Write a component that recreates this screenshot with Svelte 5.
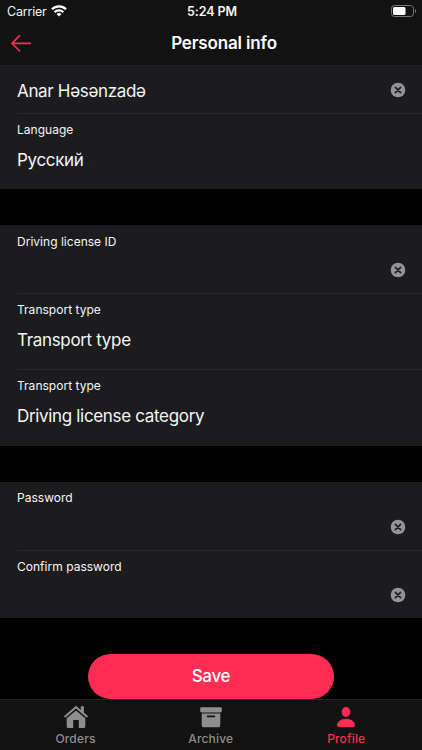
<script lang="ts">
    interface Field {
        label?: string;
        value?: string;
        clearable?: boolean;
    }

    let groups: Field[][] = $state([
        [
            { value: 'Anar Həsənzadə', clearable: true },
            { label: 'Language', value: 'Русский' }
        ],
        [
            { label: 'Driving license ID', value: '', clearable: true },
            { label: 'Transport type', value: 'Transport type' },
            { label: 'Transport type', value: 'Driving license category' }
        ],
        [
            { label: 'Password', value: '', clearable: true },
            { label: 'Confirm password', value: '', clearable: true }
        ]
    ]);

    const tabs = ['Orders', 'Archive', 'Profile'];
    let activeTab = $state('Profile');
</script>

<div class="screen">
    <header>
        <div class="status-bar">
            <div class="carrier">
                <span>Carrier</span>
                <svg width="16" height="12" viewBox="0 0 16 12" fill="none" stroke="#fff" stroke-width="2.3">
                    <path d="M1 4.3a10 10 0 0 1 14 0" />
                    <path d="M3.6 7.2a6.3 6.3 0 0 1 8.8 0" />
                    <path d="M8 11.6 5.5 9.1a3.6 3.6 0 0 1 5 0z" fill="#fff" stroke="none" />
                </svg>
            </div>
            <span class="time">5:24 PM</span>
            <svg class="battery" width="26" height="12" viewBox="0 0 26 12">
                <rect x="0.5" y="0.5" width="22" height="11" rx="3" fill="none" stroke="#77777a" />
                <rect x="2" y="2" width="12.5" height="8" rx="1.5" fill="#fff" />
                <path d="M24 4v4c1.6-.6 1.6-3.4 0-4z" fill="#77777a" />
            </svg>
        </div>
        <div class="nav-bar">
            <button class="back" aria-label="Back">
                <svg width="22" height="18" viewBox="0 0 22 18" fill="none" stroke="#f02e56" stroke-width="1.7" stroke-linecap="round" stroke-linejoin="round">
                    <path d="M20.4 9.300H2M9.600 1.600 2 9.300l7.600 7.700" />
                </svg>
            </button>
            <h1>Personal info</h1>
        </div>
    </header>

    <main>
        {#each groups as group}
            <section>
                {#each group as field}
                    <div class="field" class:compact={!field.label} class:text={field.label && !field.clearable}>
                        {#if field.label}
                            <span class="label">{field.label}</span>
                        {/if}
                        <div class="value-row">
                            <span class="value">{field.value}</span>
                            {#if field.clearable}
                                <button class="clear" aria-label="Clear" onclick={() => (field.value = '')}>
                                    <svg width="16" height="16" viewBox="0 0 16 16">
                                        <circle cx="8" cy="8" r="7.3" fill="#949496" />
                                        <path d="m5.4 5.4 5.2 5.2m0-5.2-5.2 5.2" stroke="#1c1c1e" stroke-width="1.7" stroke-linecap="round" />
                                    </svg>
                                </button>
                            {/if}
                        </div>
                    </div>
                {/each}
            </section>
        {/each}
        <button class="save">Save</button>
    </main>

    <nav class="tab-bar">
        {#each tabs as tab}
            <button class="tab" class:active={tab === activeTab} onclick={() => (activeTab = tab)}>
                {#if tab === 'Orders'}
                    <svg width="26" height="24" viewBox="0 0 26 24" fill="currentColor">
                        <path d="M13 .8.9 11.2l1.4 1.5L13 3.6l10.7 9.1 1.4-1.5-4.2-3.6V1.2h-3.1v3.7z" />
                        <path d="M13 5.4 3.7 13.3v8.5c0 .7.5 1.2 1.2 1.2h5.3v-8h5.6v8h5.3c.7 0 1.2-.5 1.2-1.2v-8.5z" />
                    </svg>
                {:else if tab === 'Archive'}
                    <svg width="26" height="24" viewBox="0 0 26 24" fill="currentColor">
                        <rect x="2.2" y="2.2" width="21.6" height="5.2" rx="1.3" />
                        <path fill-rule="evenodd" d="M3.7 8.5h18.6v11.2a2.6 2.6 0 0 1-2.6 2.6H6.3a2.6 2.6 0 0 1-2.6-2.6zM9.7 10.5a.9.9 0 0 0 0 1.8h6.6a.9.9 0 0 0 0-1.8z" />
                    </svg>
                {:else}
                    <svg width="26" height="24" viewBox="0 0 26 24" fill="currentColor">
                        <ellipse cx="13" cy="7" rx="4.3" ry="4.9" />
                        <path d="M4 20.3c0-3.7 4-6.6 9-6.6s9 2.9 9 6.6c0 1.2-.7 1.7-2 1.7H6c-1.300 0-2-.5-2-1.7z" />
                    </svg>
                {/if}
                <span>{tab}</span>
            </button>
        {/each}
    </nav>
</div>

<style>
    :global(body) {
        margin: 0;
        background: #000;
    }

    .screen {
        display: flex;
        flex-direction: column;
        width: 422px;
        height: 750px;
        overflow: hidden;
        background: #000;
        color: #f5f5f5;
        font-family: Inter, "Noto Sans", sans-serif;
    }

    button {
        padding: 0;
        border: none;
        background: none;
        color: inherit;
        font-family: inherit;
        cursor: pointer;
    }

    svg {
        display: block;
    }

    header {
        box-sizing: border-box;
        height: 65.8px;
        flex-shrink: 0;
        background: #121212;
        border-bottom: 1px solid #232325;
    }

    .status-bar {
        display: grid;
        grid-template-columns: 1fr auto 1fr;
        align-items: center;
        height: 22px;
        padding: 0 5px 0 7px;
        font-size: 12.5px;
    }

    .carrier {
        display: flex;
        align-items: center;
        gap: 4px;
        letter-spacing: -0.2px;
    }

    .time {
        font-weight: 600;
        letter-spacing: -0.1px;
    }

    .battery {
        justify-self: end;
    }

    .nav-bar {
        display: flex;
        align-items: center;
        height: 42px;
        padding: 0 6px 0 10px;
    }

    /* centred in the space right of the back button */
    h1 {
        flex: 1;
        margin: 0;
        font-size: 17px;
        font-weight: 600;
        letter-spacing: -0.15px;
        text-align: center;
        color: #fff;
    }

    main {
        display: flex;
        flex-direction: column;
        flex: 1;
        gap: 36px;
    }

    section {
        background: #1c1c1e;
    }

    .field {
        display: flex;
        flex-direction: column;
        box-sizing: border-box;
        height: 68.1px;
        margin-left: 17px;
        padding-top: 8.6px;
    }

    .field + .field {
        padding-top: 7.8px;
        border-top: 1px solid #29292b;
    }

    .field.text {
        height: 76.2px;
    }

    .field.compact {
        height: 47.2px;
        padding-top: 3.3px;
    }

    .label {
        font-size: 12px;
        line-height: 16px;
        letter-spacing: 0.02px;
    }

    .value-row {
        display: flex;
        align-items: center;
        justify-content: space-between;
        height: 44px;
        padding-right: 16px;
        flex-shrink: 0;
    }

    .value {
        font-size: 17px;
        letter-spacing: -0.33px;
    }

    .clear {
        margin-bottom: 3px;
    }

    .save {
        align-self: center;
        width: 246px;
        height: 44.8px;
        border-radius: 23px;
        background: #ff2d55;
        color: #fff;
        font-size: 17px;
        font-weight: 500;
        letter-spacing: -0.3px;
    }

    .tab-bar {
        display: grid;
        grid-template-columns: 143px 1fr 143.5px;
        box-sizing: border-box;
        height: 51.5px;
        flex-shrink: 0;
        padding: 0 4px;
        background: #121212;
        border-top: 1px solid #242426;
    }

    .tab {
        display: flex;
        flex-direction: column;
        align-items: center;
        padding-top: 5px;
        gap: 3px;
        color: #8e8e90;
        font-size: 12px;
        line-height: 14px;
        font-weight: 500;
        letter-spacing: 0.15px;
    }

    .tab.active {
        color: #ff2d55;
    }
</style>
